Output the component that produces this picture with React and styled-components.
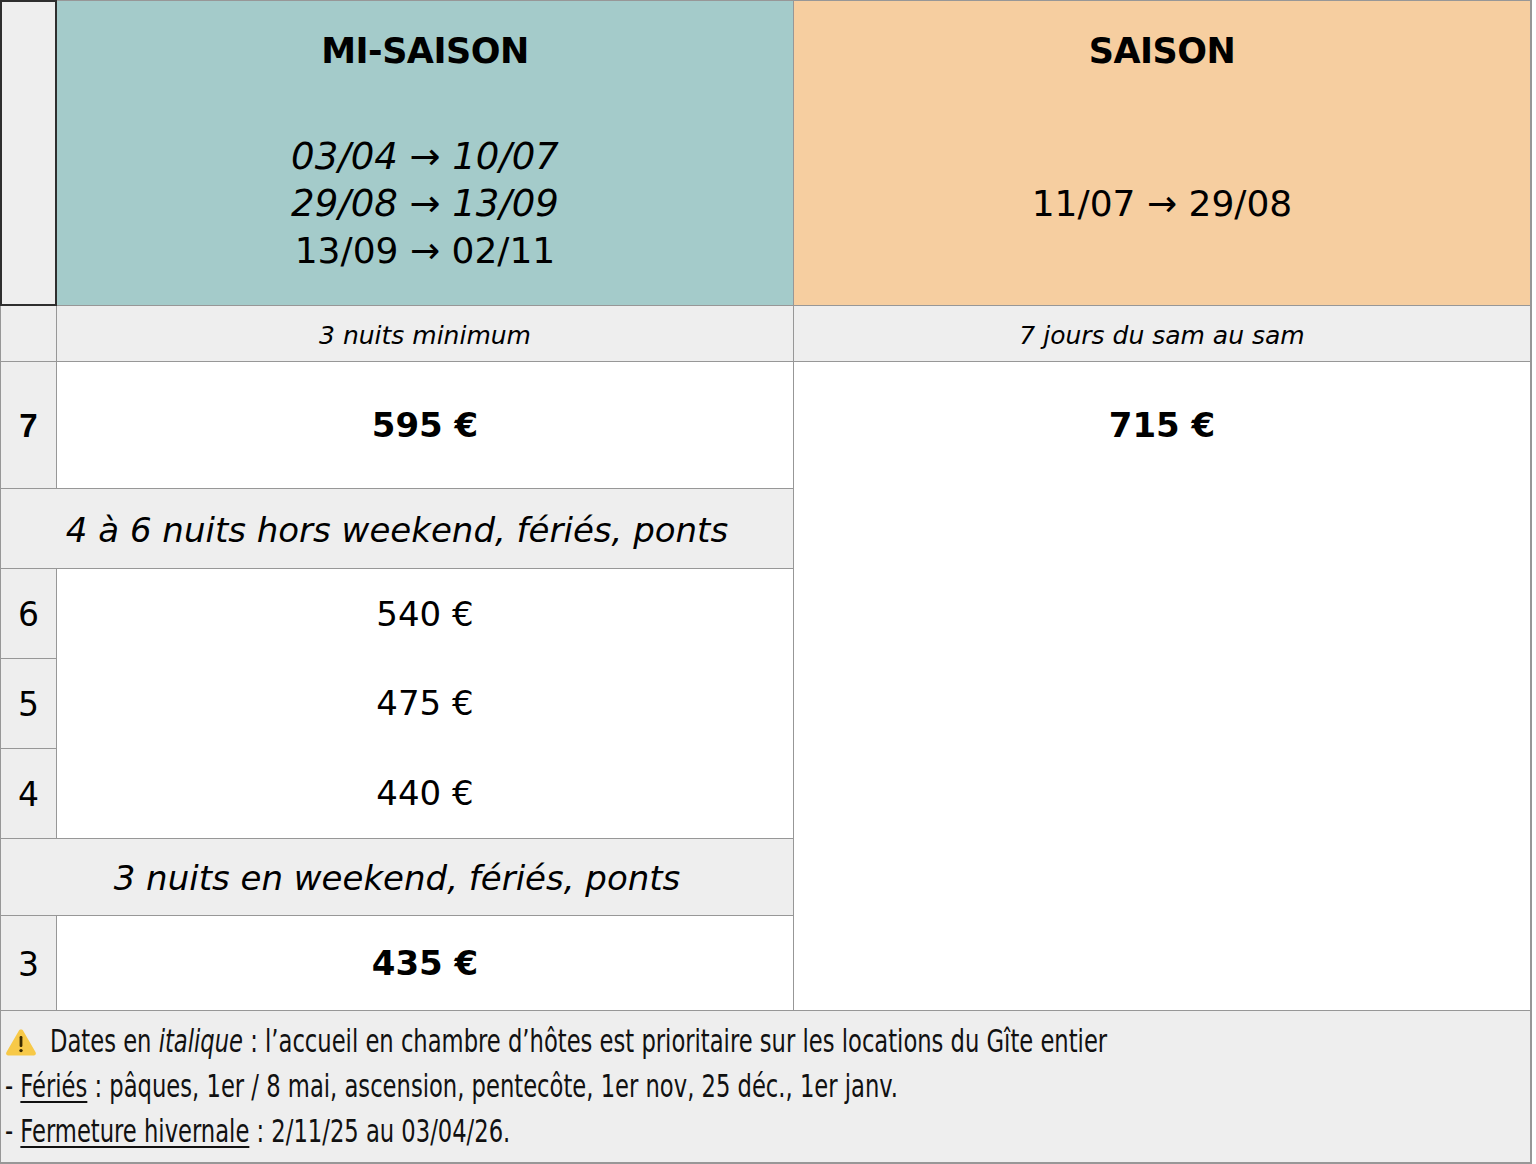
import React from 'react';
import styled, { createGlobalStyle } from 'styled-components';

const GlobalStyle = createGlobalStyle`
  html, body {
    margin: 0;
    padding: 0;
    background: #ffffff;
  }
`;

const hand = `"Comic Sans MS", "Chalkboard", "DejaVu Sans", sans-serif`;
const narrow = `"Liberation Sans Narrow", "DejaVu Sans Condensed", sans-serif`;

const Table = styled.div`
  display: grid;
  grid-template-columns: 55px 736px 736px;
  grid-template-rows: 304px 55px 126px 79px 89px 89px 89px 76px 94px 151px;
  gap: 1px;
  padding: 1px 2px 2px 1px;
  width: 1532px;
  box-sizing: border-box;
  background: #979797;
  font-family: ${hand};
  color: #000;
`;

const Corner = styled.div`
  grid-column: 1;
  grid-row: 1;
  background: #eeeeee;
  box-shadow: 0 0 0 1px #2e2e2e, inset 0 0 0 1px #2e2e2e;
  position: relative;
  z-index: 1;
`;

const SeasonHead = styled.div`
  display: grid;
  grid-template-rows: 100px 1fr;
  background: ${(p) => (p.$tone === 'high' ? '#f6cea0' : '#a4cbca')};
`;

const SeasonTitle = styled.div`
  display: flex;
  align-items: center;
  justify-content: center;
  font-size: 35px;
  font-weight: 700;
  letter-spacing: -0.5px;
`;

const Dates = styled.div`
  display: flex;
  flex-direction: column;
  align-items: center;
  justify-content: center;
`;

const DateLine = styled.div`
  font-size: ${(p) => (p.$italic ? '37px' : '36px')};
  line-height: 47px;
  font-style: ${(p) => (p.$italic ? 'italic' : 'normal')};
  white-space: nowrap;
`;

const SideCell = styled.div`
  display: flex;
  align-items: center;
  justify-content: center;
  background: #eeeeee;
  font-size: 33px;
  font-weight: ${(p) => (p.$bold ? 700 : 400)};
  font-family: ${(p) => (p.$bold ? '"Liberation Sans", Arial, sans-serif' : hand)};
  padding-top: 2px;
`;

const Note = styled.div`
  display: flex;
  align-items: center;
  justify-content: center;
  background: #eeeeee;
  font-size: 25px;
  font-style: italic;
  padding-top: 4px;
`;

const Price = styled.div`
  display: flex;
  align-items: center;
  justify-content: center;
  background: #ffffff;
  font-size: 34px;
  font-weight: ${(p) => (p.$bold ? 700 : 400)};
`;

const PriceStack = styled.div`
  grid-column: 2;
  grid-row: 5 / span 3;
  display: grid;
  grid-template-rows: repeat(3, 1fr);
  background: #ffffff;
`;

const HighSeason = styled.div`
  grid-column: 3;
  grid-row: 3 / span 7;
  display: grid;
  grid-template-rows: 126px 1fr;
  background: #ffffff;
`;

const Banner = styled.div`
  grid-column: 1 / span 2;
  display: flex;
  align-items: center;
  justify-content: center;
  background: #eeeeee;
  font-size: 34px;
  font-style: italic;
  padding-top: 2px;
`;

const Footer = styled.div`
  grid-column: 1 / span 3;
  background: #eeeeee;
  padding: 8px 0 0 4px;
  font-family: ${narrow};
  font-size: 32px;
  line-height: 45px;
  color: #111;
`;

const FootLine = styled.div`
  display: flex;
  align-items: center;
  gap: ${(p) => (p.$icon ? '13px' : '0')};
  white-space: pre;
`;

const FootText = styled.span`
  display: inline-block;
  transform: scaleX(0.787);
  transform-origin: left center;
`;

const Under = styled.span`
  text-decoration: underline;
  text-underline-offset: 4px;
  text-decoration-thickness: 1.5px;
`;

const WarnIcon = () => (
  <svg width="32" height="28" viewBox="0 0 32 28">
    <path
      d="M16 1.5c1 0 1.8.5 2.3 1.4l12.3 21.3c.9 1.6-.2 3.3-2 3.3H3.4c-1.8 0-2.9-1.7-2-3.3L13.7 2.9c.5-.9 1.3-1.4 2.3-1.4z"
      fill="#f7c948"
    />
    <rect x="14.6" y="8" width="2.8" height="11" rx="1.2" fill="#3a2a00" />
    <circle cx="16" cy="22.6" r="1.7" fill="#3a2a00" />
  </svg>
);

const App = () => {
  return (
    <>
      <GlobalStyle />
      <Table>
        <Corner />
        <SeasonHead $tone="mid">
          <SeasonTitle>MI-SAISON</SeasonTitle>
          <Dates>
            <DateLine $italic>03/04 → 10/07</DateLine>
            <DateLine $italic>29/08 → 13/09</DateLine>
            <DateLine>13/09 → 02/11</DateLine>
          </Dates>
        </SeasonHead>
        <SeasonHead $tone="high">
          <SeasonTitle>SAISON</SeasonTitle>
          <Dates>
            <DateLine>11/07 → 29/08</DateLine>
          </Dates>
        </SeasonHead>

        <SideCell />
        <Note>3 nuits minimum</Note>
        <Note>7 jours du sam au sam</Note>

        <SideCell $bold>7</SideCell>
        <Price $bold>595 €</Price>
        <HighSeason>
          <Price $bold>715 €</Price>
        </HighSeason>

        <Banner>4 à 6 nuits hors weekend, fériés, ponts</Banner>

        <SideCell>6</SideCell>
        <PriceStack>
          <Price>540 €</Price>
          <Price>475 €</Price>
          <Price>440 €</Price>
        </PriceStack>
        <SideCell>5</SideCell>
        <SideCell>4</SideCell>

        <Banner>3 nuits en weekend, fériés, ponts</Banner>

        <SideCell>3</SideCell>
        <Price $bold>435 €</Price>

        <Footer>
          <FootLine $icon>
            <WarnIcon />
            <FootText>
              Dates en <i>italique</i> : l’accueil en chambre d’hôtes est prioritaire sur les locations du Gîte entier
            </FootText>
          </FootLine>
          <FootLine>
            <FootText>
              - <Under>Fériés</Under> : pâques, 1er / 8 mai, ascension, pentecôte, 1er nov, 25 déc., 1er janv.
            </FootText>
          </FootLine>
          <FootLine>
            <FootText>
              - <Under>Fermeture hivernale</Under> : 2/11/25 au 03/04/26.
            </FootText>
          </FootLine>
        </Footer>
      </Table>
    </>
  );
};

export default App;
